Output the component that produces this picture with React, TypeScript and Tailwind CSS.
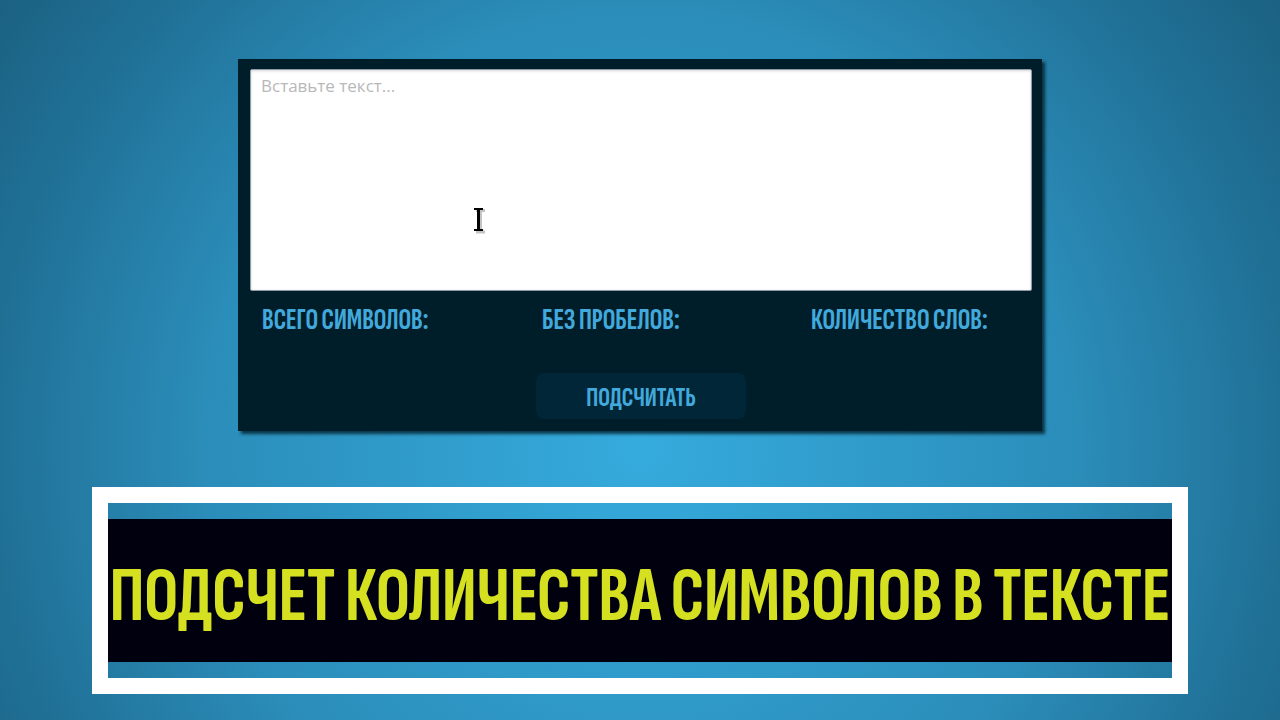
import { useState } from "react";
import type { FormEvent } from "react";

const labelFont =
  "font-['Sofia_Sans_Extra_Condensed','Open_Sans_Condensed','Liberation_Sans',sans-serif] font-bold uppercase";

function TextCursor() {
  return (
    <svg
      className="pointer-events-none absolute left-[222px] top-[137px] h-7 w-4"
      viewBox="0 0 16 28"
      fill="none"
      aria-hidden="true"
    >
      <path d="M4 4.500h9M4 26h9M8.500 4v22" stroke="#c4c4c4" strokeWidth="3" />
      <path d="M2 3h9M2 24h9" stroke="#000" strokeWidth="2" />
      <path d="M6.500 3v21" stroke="#000" strokeWidth="3" />
    </svg>
  );
}

export default function App() {
  const [text, setText] = useState("");
  const [counts, setCounts] = useState<number[] | null>(null);

  const count = (event: FormEvent) => {
    event.preventDefault();
    const words = text.trim() ? text.trim().split(/\s+/).length : 0;
    setCounts([text.length, text.replace(/\s/g, "").length, words]);
  };

  return (
    <main
      lang="ru"
      className="flex min-h-screen flex-col items-center gap-14 bg-[radial-gradient(circle_at_50%_62%,#35abdd_0%,#2b8db9_56%,#207197_82%,#1b6182_100%)] px-6 pt-[59px] pb-[26px]"
    >
      <form
        onSubmit={count}
        className="flex w-full max-w-[804px] flex-col bg-[#001e29] pt-2.5 pr-2.5 pb-3 pl-3 shadow-[3px_3px_3px_#001e29cc]"
      >
        <div className="relative flex">
          <textarea
            aria-label="Текст"
            placeholder="Вставьте текст..."
            value={text}
            onChange={(event) => setText(event.target.value)}
            className="h-[222px] w-full resize-none rounded-xs border border-[#8d9da5] bg-white px-2.5 py-1 font-['Open_Sans',sans-serif] text-[17px] leading-6 text-gray-800 shadow-[inset_0_1px_3px_#d5d5dd] outline-none placeholder:text-[#b8b8b8]"
          />
          <TextCursor />
        </div>
        <div className={`grid grid-cols-[280px_269px_1fr] px-3 pt-3.5 text-[29px] leading-8 text-[#42a9dc] ${labelFont}`}>
          <output>Всего символов:{counts && ` ${counts[0]}`}</output>
          <output>Без пробелов:{counts && ` ${counts[1]}`}</output>
          <output>Количество слов:{counts && ` ${counts[2]}`}</output>
        </div>
        <button
          type="submit"
          className={`mt-9 h-[46px] w-[210px] self-center rounded-lg bg-[#002637] pt-1 text-[27px] leading-8 text-[#42a9dc] ${labelFont}`}
        >
          Подсчитать
        </button>
      </form>
      <section className="w-full max-w-[1096px] border-[16px] border-white py-4">
        <h1
          className={`flex h-[143px] items-center justify-center bg-[#00000f] pt-3 text-center text-[78px] leading-none whitespace-nowrap text-[#d5e021] ${labelFont}`}
        >
          Подсчет количества символов в тексте
        </h1>
      </section>
    </main>
  );
}
